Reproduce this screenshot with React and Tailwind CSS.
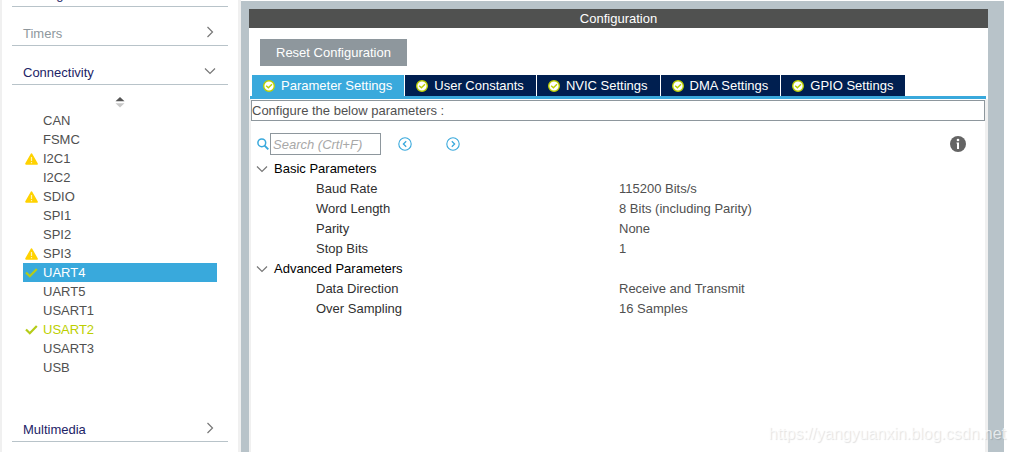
// src/App.jsx

import React, { useState } from 'react'

const peripherals = [
  { name: 'CAN' },
  { name: 'FSMC' },
  { name: 'I2C1', status: 'warning' },
  { name: 'I2C2' },
  { name: 'SDIO', status: 'warning' },
  { name: 'SPI1' },
  { name: 'SPI2' },
  { name: 'SPI3', status: 'warning' },
  { name: 'UART4', status: 'ok' },
  { name: 'UART5' },
  { name: 'USART1' },
  { name: 'USART2', status: 'ok' },
  { name: 'USART3' },
  { name: 'USB' },
];

const tabs = [
  'Parameter Settings',
  'User Constants',
  'NVIC Settings',
  'DMA Settings',
  'GPIO Settings',
];

const groups = [
  {
    title: 'Basic Parameters',
    rows: [
      ['Baud Rate', '115200 Bits/s'],
      ['Word Length', '8 Bits (including Parity)'],
      ['Parity', 'None'],
      ['Stop Bits', '1'],
    ],
  },
  {
    title: 'Advanced Parameters',
    rows: [
      ['Data Direction', 'Receive and Transmit'],
      ['Over Sampling', '16 Samples'],
    ],
  },
];

function Chevron({ open }) {
  return (
    <svg width="12" height="12" viewBox="0 0 12 12" fill="none" stroke="#777" strokeWidth="1.2">
      <path d={open ? 'M1 3.5 6 8.5 11 3.5' : 'M3.5 1 8.5 6 3.5 11'} />
    </svg>
  );
}

function StatusIcon({ status }) {
  if (status === 'warning') {
    return (
      <svg width="13" height="12" viewBox="0 0 13 12">
        <path d="M6.5 1.4 11.8 10.8H1.2Z" fill="#ffd200" stroke="#ffd200" strokeWidth="2" strokeLinejoin="round" />
        <path d="M6.5 4v4M6.5 9v1.3" stroke="#fff3b8" strokeWidth="1.2" />
      </svg>
    );
  }
  if (status === 'ok') {
    return (
      <svg width="13" height="12" viewBox="0 0 13 12" fill="none" stroke="#b5cc18" strokeWidth="2.2">
        <path d="M1 5.5 4.8 9.3 11.8 2" />
      </svg>
    );
  }
  return null;
}

function TabCheck() {
  return (
    <svg width="12" height="12" viewBox="0 0 12 12" fill="none">
      <circle cx="6" cy="6" r="5.3" fill="#fff" stroke="#bccf00" strokeWidth="1.4" />
      <path d="M3.2 5.8 5.4 7.8 9 4.2" stroke="#bccf00" strokeWidth="1.4" />
    </svg>
  );
}

function CircleArrow({ d }) {
  return (
    <svg width="14" height="14" viewBox="0 0 14 14" fill="none" stroke="#39a9dc">
      <circle cx="7" cy="7" r="6.2" strokeWidth="1.1" />
      <path d={d} strokeWidth="1.3" />
    </svg>
  );
}

function Category({ name, open, muted }) {
  return (
    <button
      className={[
        'flex h-[39px] w-full shrink-0 items-end justify-between border-b border-[#b8c3c9] pr-3 pb-[3px] pl-[11px] leading-4',
        muted ? 'text-[#8e979d]' : 'text-[#1c2366]',
      ].join(' ')}
    >
      {name}
      <span className="pb-1">
        <Chevron open={open} />
      </span>
    </button>
  );
}

export default function App() {
  const [selected, setSelected] = useState('UART4');
  const [tab, setTab] = useState('Parameter Settings');
  const [closed, setClosed] = useState([]);
  const [query, setQuery] = useState('');

  const toggle = title =>
    setClosed(closed.includes(title) ? closed.filter(t => t !== title) : [...closed, title]);

  return (
    <div className="relative flex h-screen overflow-hidden bg-white font-['Liberation_Sans',Arial,sans-serif] text-[13px] leading-4">
      {/* Peripheral categories */}
      <aside className="flex w-[241px] shrink-0 flex-col border-r-[3px] border-l-2 border-[#f0f0f0] px-2.5">
        <div className="flex h-[7px] shrink-0 items-end overflow-hidden">
          <Category name="Analog" />
        </div>
        <Category name="Timers" muted />
        <Category name="Connectivity" open />

        <div className="flex h-[26px] shrink-0 items-end justify-center pb-[3px]">
          <svg width="10" height="12" viewBox="0 0 10 12">
            <path d="M5 1 9.5 5.2H0.5Z" fill="#555" />
            <path d="M5 11.5 9.5 7.3H0.5Z" fill="#c8c8c8" />
          </svg>
        </div>
        <ul className="mx-[11px] shrink-0">
          {peripherals.map(p => {
            const color =
              p.name === selected
                ? 'bg-[#39a9dc] text-white'
                : p.status === 'ok'
                ? 'text-[#bccf00]'
                : 'text-[#505050]';
            return (
              <li key={p.name}>
                <button
                  className={['flex h-[19px] w-full items-center', color].join(' ')}
                  onClick={() => setSelected(p.name)}
                >
                  <span className="w-5 pl-0.5">
                    <StatusIcon status={p.status} />
                  </span>
                  {p.name}
                </button>
              </li>
            );
          })}
        </ul>
        <div className="mt-[26px]">
          <Category name="Multimedia" />
        </div>
      </aside>

      {/* Configuration panel */}
      <main className="mt-px mr-3 flex flex-1 flex-col border-t-8 border-r-[16px] border-l-8 border-[#b8c3c9]">
        <h1 className="bg-[#505150] pt-0.5 pb-px text-center text-white">Configuration</h1>

        <div className="px-[11px] pt-[11px] pb-[9px]">
          <button className="h-[27px] bg-[#8e979d] px-4 text-white">Reset Configuration</button>
        </div>

        <div role="tablist" className="flex gap-px pl-[3px]">
          {tabs.map(t => (
            <button
              key={t}
              role="tab"
              aria-selected={t === tab}
              className={[
                'flex h-[21px] items-center gap-1.5 pr-3 pl-[11px] text-white',
                t === tab ? 'bg-[#39a9dc]' : 'bg-[#001f50]',
              ].join(' ')}
              onClick={() => setTab(t)}
            >
              <TabCheck />
              {t}
            </button>
          ))}
        </div>
        <div className="mr-0.5 ml-px h-[3px] bg-[#39a9dc]" />

        <section className="flex-1 border-r-[3px] border-l-2 border-[#f0f0f0] pt-px">
          <p className="border border-[#8e979d] pt-0.5 pb-px text-[#505050]">
            Configure the below parameters :
          </p>

          <div className="flex items-center pt-3 pr-[19px] pb-1 pl-1.5">
            <label htmlFor="search" className="w-[13px]" aria-label="Search">
              <svg width="12" height="12" viewBox="0 0 12 12" fill="none" stroke="#39a9dc">
                <circle cx="4.8" cy="4.8" r="3.9" strokeWidth="1.5" />
                <path d="M7.6 7.6 11.3 11.3" strokeWidth="1.9" />
              </svg>
            </label>
            <input
              id="search"
              className="h-[22px] w-[111px] border border-[#8e979d] px-0.5 italic outline-none placeholder:text-[#a8a8a8]"
              value={query}
              onChange={e => setQuery(e.target.value)}
              placeholder="Search (Crtl+F)"
            />
            <button className="ml-[17px]" aria-label="Previous match">
              <CircleArrow d="M8.2 4.2 5.4 7 8.2 9.8" />
            </button>
            <button className="ml-[34px]" aria-label="Next match">
              <CircleArrow d="M5.8 4.2 8.6 7 5.8 9.8" />
            </button>
            <button className="ml-auto" aria-label="Info">
              <svg width="16" height="16" viewBox="0 0 16 16">
                <circle cx="8" cy="8" r="8" fill="#646464" />
                <circle cx="8" cy="4" r="1.3" fill="#fff" />
                <path d="M6.5 6.5H9V13H7V7.5H6.5Z" fill="#fff" />
              </svg>
            </button>
          </div>

          <table className="w-full table-fixed text-left">
            {groups.map(g => (
              <tbody key={g.title}>
                <tr className="h-5">
                  <th colSpan={2} className="p-0 pl-[5px] font-normal text-black">
                    <button className="flex items-center gap-1.5" onClick={() => toggle(g.title)}>
                      <Chevron open={!closed.includes(g.title)} />
                      {g.title}
                    </button>
                  </th>
                </tr>
                {!closed.includes(g.title) &&
                  g.rows.map(([label, value]) => (
                    <tr key={label} className="h-5">
                      <th className="p-0 pl-[65px] font-normal text-[#303030]">{label}</th>
                      <td className="p-0 pl-px text-[#505050]">{value}</td>
                    </tr>
                  ))}
              </tbody>
            ))}
          </table>
        </section>
      </main>

      {/* Watermark */}
      <div className="pointer-events-none absolute right-2.5 bottom-2 text-base leading-5 text-white/70 [text-shadow:1px_1px_1px_rgba(0,0,0,0.12)]">
        https://yangyuanxin.blog.csdn.net
      </div>
    </div>
  );
}
